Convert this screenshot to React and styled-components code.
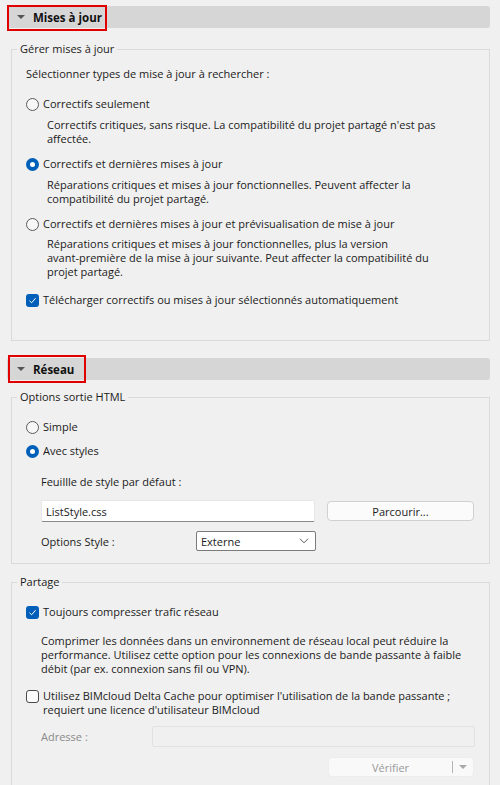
import styled, { createGlobalStyle } from "styled-components";

const GlobalStyle = createGlobalStyle`
  body {
    margin: 0;
    background: #f0f0f0;
    font-family: "Segoe UI", "Open Sans", "Noto Sans", sans-serif;
    font-size: 11px;
    color: #1b1b1b;
  }
`;

const Page = styled.div`
  padding: 6px 10px 0 7px;
  height: 779px;
  overflow: hidden;
`;

const Header = styled.div`
  position: relative;
  height: 22px;
  margin-top: ${(p) => p.$top || 0}px;
  display: flex;
  align-items: center;
  gap: 8px;
  padding-left: 10px;
  background: #d6d6d6;
  border-radius: 3px;
  font-weight: 700;
  font-size: 11.5px;
  color: #111;
`;

const Marker = styled.div`
  position: absolute;
  left: ${(p) => p.$left}px;
  top: ${(p) => p.$top}px;
  width: ${(p) => p.$width}px;
  height: ${(p) => p.$height}px;
  box-sizing: border-box;
  border: 2px solid #e00000;
`;

const Caret = styled.span`
  width: 0;
  height: 0;
  border-left: 4px solid transparent;
  border-right: 4px solid transparent;
  border-top: 4px solid #555;
`;

const Group = styled.fieldset`
  margin: ${(p) => p.$top}px 0 0 4px;
  padding: 0;
  min-width: 0;
  border: 1px solid #dadada;
`;

const Legend = styled.legend`
  margin-left: 5px;
  padding: 0 3px;
  line-height: 16px;
`;

const Body = styled.div`
  padding: ${(p) => p.$pad};
`;

const Line = styled.div`
  line-height: 16px;
  margin-top: ${(p) => p.$top || 0}px;
  padding-left: ${(p) => p.$indent || 0}px;
`;

const Row = styled.div`
  display: flex;
  align-items: ${(p) => (p.$wrap ? "flex-start" : "center")};
  gap: 4px;
  min-height: 16px;
  line-height: ${(p) => (p.$wrap ? "13.5px" : "16px")};
  margin-top: ${(p) => p.$top || 0}px;
`;

const Radio = styled.span`
  flex: none;
  width: 13px;
  height: 13px;
  box-sizing: border-box;
  border-radius: 50%;
  border: ${(p) => (p.$on ? "none" : "1px solid #5a5a5a")};
  background: ${(p) => (p.$on ? "#005fb8" : "#f7f7f7")};
  display: flex;
  align-items: center;
  justify-content: center;

  &::after {
    content: "";
    display: ${(p) => (p.$on ? "block" : "none")};
    width: 5px;
    height: 5px;
    border-radius: 50%;
    background: #fff;
  }
`;

const Box = styled.span`
  flex: none;
  width: 13px;
  height: 13px;
  box-sizing: border-box;
  border-radius: 3px;
  border: ${(p) => (p.$on ? "none" : "1px solid #4a4a4a")};
  background: ${(p) => (p.$on ? "#005fb8" : "#fbfbfb")};
  margin-top: ${(p) => p.$offset || 0}px;
  display: flex;
  align-items: center;
  justify-content: center;
`;

const Desc = styled.div`
  padding-left: ${(p) => p.$indent}px;
  margin-top: ${(p) => p.$top}px;
  line-height: 14px;
`;

const FieldRow = styled.div`
  display: flex;
  align-items: center;
  margin-top: ${(p) => p.$top || 0}px;
  padding-left: ${(p) => p.$indent || 0}px;
  gap: ${(p) => p.$gap || 0}px;
`;

const TextInput = styled.div`
  width: ${(p) => p.$width}px;
  height: ${(p) => p.$height}px;
  box-sizing: border-box;
  padding-left: 4px;
  display: flex;
  align-items: center;
  background: ${(p) => (p.$disabled ? "#f0f0f0" : "#ffffff")};
  border: 1px solid ${(p) => (p.$disabled ? "#e2e2e2" : "#e6e6e6")};
  border-bottom-color: ${(p) => (p.$disabled ? "#e2e2e2" : "#8a8a8a")};
  border-radius: 2px;
`;

const Button = styled.div`
  width: ${(p) => p.$width}px;
  height: 20px;
  box-sizing: border-box;
  display: flex;
  align-items: center;
  justify-content: center;
  background: ${(p) => (p.$disabled ? "#f9f9f9" : "#fbfbfb")};
  border: 1px solid ${(p) => (p.$disabled ? "#ededed" : "#d0d0d0")};
  border-radius: 4px;
  color: ${(p) => (p.$disabled ? "#9a9a9a" : "#1b1b1b")};
`;

const SplitMain = styled.span`
  flex: 1;
  text-align: center;
`;

const SplitArrow = styled.span`
  width: 20px;
  height: 12px;
  border-left: 1px solid #b5b5b5;
  display: flex;
  align-items: center;
  justify-content: center;

  &::after {
    content: "";
    border-left: 4px solid transparent;
    border-right: 4px solid transparent;
    border-top: 4px solid #a8a8a8;
  }
`;

const Select = styled.div`
  width: 120px;
  height: 20px;
  box-sizing: border-box;
  display: flex;
  align-items: center;
  justify-content: space-between;
  padding: 0 6px 0 4px;
  background: #fff;
  border: 1px solid #7a7a7a;
  border-radius: 2px;
`;

const FieldLabel = styled.span`
  width: ${(p) => p.$width}px;
  color: ${(p) => (p.$muted ? "#8a8a8a" : "inherit")};
`;

const Check = () => (
  <svg width="9" height="9" viewBox="0 0 9 9">
    <path d="M1.5 4.8 L3.6 6.8 L7.6 2.2" fill="none" stroke="#fff" strokeWidth="1" />
  </svg>
);

const Chevron = () => (
  <svg width="10" height="6" viewBox="0 0 10 6">
    <path d="M1 0.8 L5 4.8 L9 0.8" fill="none" stroke="#555" strokeWidth="1" />
  </svg>
);

export default function App() {
  return (
    <>
      <GlobalStyle />
      <Page>
        <Header>
          <Marker $left={0} $top={-1} $width={100} $height={26} />
          <Caret />
          Mises à jour
        </Header>
        <Group $top={13}>
          <Legend>Gérer mises à jour</Legend>
          <Body $pad="9px 0 32px 14px">
            <Line>Sélectionner types de mise à jour à rechercher :</Line>
            <Row $top={14}>
              <Radio />
              Correctifs seulement
            </Row>
            <Desc $indent={21} $top={6}>
              Correctifs critiques, sans risque. La compatibilité du projet partagé n'est pas
              <br />
              affectée.
            </Desc>
            <Row $top={10}>
              <Radio $on />
              Correctifs et dernières mises à jour
            </Row>
            <Desc $indent={21} $top={6}>
              Réparations critiques et mises à jour fonctionnelles. Peuvent affecter la
              <br />
              compatibilité du projet partagé.
            </Desc>
            <Row $top={10}>
              <Radio />
              Correctifs et dernières mises à jour et prévisualisation de mise à jour
            </Row>
            <Desc $indent={21} $top={5}>
              Réparations critiques et mises à jour fonctionnelles, plus la version
              <br />
              avant-première de la mise à jour suivante. Peut affecter la compatibilité du
              <br />
              projet partagé.
            </Desc>
            <Row $top={13}>
              <Box $on>
                <Check />
              </Box>
              Télécharger correctifs ou mises à jour sélectionnés automatiquement
            </Row>
          </Body>
        </Group>

        <Header $top={17}>
          <Marker $left={1} $top={-3} $width={78} $height={28} />
          <Caret />
          Réseau
        </Header>
        <Group $top={9}>
          <Legend>Options sortie HTML</Legend>
          <Body $pad="14px 0 12px 14px">
            <Row>
              <Radio />
              Simple
            </Row>
            <Row $top={8}>
              <Radio $on />
              Avec styles
            </Row>
            <Line $top={15} $indent={15}>
              Feuillle de style par défaut :
            </Line>
            <FieldRow $top={10} $indent={15} $gap={12}>
              <TextInput $width={274} $height={22}>
                ListStyle.css
              </TextInput>
              <Button $width={147}>Parcourir...</Button>
            </FieldRow>
            <FieldRow $top={9} $indent={15}>
              <FieldLabel $width={155}>Options Style :</FieldLabel>
              <Select>
                Externe
                <Chevron />
              </Select>
            </FieldRow>
          </Body>
        </Group>

        <Group $top={10}>
          <Legend>Partage</Legend>
          <Body $pad="14px 0 40px 14px">
            <Row>
              <Box $on>
                <Check />
              </Box>
              Toujours compresser trafic réseau
            </Row>
            <Desc $indent={15} $top={14}>
              Comprimer les données dans un environnement de réseau local peut réduire la
              <br />
              performance. Utilisez cette option pour les connexions de bande passante à faible
              <br />
              débit (par ex. connexion sans fil ou VPN).
            </Desc>
            <Row $top={13} $wrap>
              <Box $offset={1} />
              <span>
                Utilisez BIMcloud Delta Cache pour optimiser l'utilisation de la bande passante ;
                <br />
                requiert une licence d'utilisateur BIMcloud
              </span>
            </Row>
            <FieldRow $top={10} $indent={15}>
              <FieldLabel $width={111} $muted>
                Adresse :
              </FieldLabel>
              <TextInput $width={323} $height={21} $disabled />
            </FieldRow>
            <FieldRow $top={10} $indent={302}>
              <Button $width={146} $disabled>
                <SplitMain>Vérifier</SplitMain>
                <SplitArrow />
              </Button>
            </FieldRow>
          </Body>
        </Group>
      </Page>
    </>
  );
}
